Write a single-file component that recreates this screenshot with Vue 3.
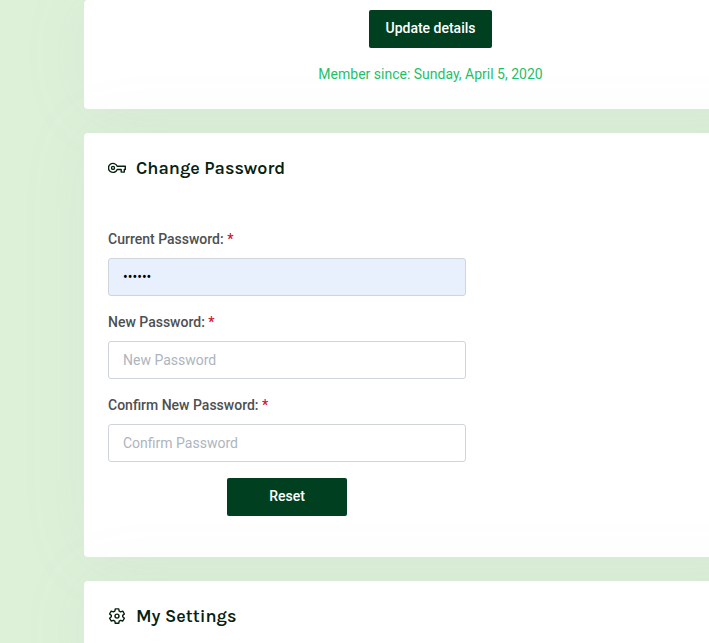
<script setup>
import { ref } from 'vue'

const fields = ref([
  { id: 'current-password', label: 'Current Password:', placeholder: 'Current Password', value: 'secret', filled: true },
  { id: 'new-password', label: 'New Password:', placeholder: 'New Password', value: '', filled: false },
  { id: 'confirm-password', label: 'Confirm New Password:', placeholder: 'Confirm Password', value: '', filled: false },
])
</script>

<template>
  <main class="page">
    <section class="card details">
      <button type="button" class="btn">Update details</button>
      <p class="since">Member since: Sunday, April 5, 2020</p>
    </section>

    <section class="card">
      <h2 class="title">
        <svg class="icon" viewBox="1 1 18 18" fill="none" stroke="currentColor" stroke-width="1.4" stroke-linejoin="round" aria-hidden="true">
          <path d="M10.2 8.3H18.3V11.5H17.3V14.1H14.2V11.5H10.2A4.5 4.5 0 1 1 10.2 8.3Z" />
          <circle cx="6" cy="9.9" r="1.5" />
        </svg>
        Change Password
      </h2>
      <form class="form" @submit.prevent>
        <div v-for="f in fields" :key="f.id" class="field">
          <label :for="f.id">{{ f.label }} <span class="required">*</span></label>
          <input :id="f.id" v-model="f.value" type="password" autocomplete="off" :placeholder="f.placeholder" :class="{ filled: f.filled }" />
        </div>
        <button type="submit" class="btn reset">Reset</button>
      </form>
    </section>

    <section class="card settings">
      <h2 class="title">
        <svg class="icon" viewBox="1 1 18 18" fill="none" stroke="currentColor" stroke-width="1.4" stroke-linejoin="round" aria-hidden="true">
          <path d="M8.3 2.9H11.7L12.2 5.1L13.6 5.9L15.8 5.2L17.4 8L15.7 9.4V10.8L17.4 12.2L15.8 15L13.6 14.3L12.2 15.1L11.7 17.3H8.3L7.8 15.1L6.4 14.3L4.2 15L2.6 12.2L4.3 10.8V9.4L2.6 8L4.2 5.2L6.4 5.9L7.8 5.1Z" />
          <circle cx="10" cy="10.1" r="2" />
        </svg>
        My Settings
      </h2>
    </section>
  </main>
</template>

<style>
body {
  margin: 0;
  background: #ddf1d9;
}
</style>

<style scoped>
.page {
  box-sizing: border-box;
  height: 100vh;
  padding-left: 84px;
  overflow: hidden;
  font-family: Roboto, "Liberation Sans", sans-serif;
  font-size: 14px;
  line-height: 21px;
}

.card {
  box-sizing: border-box;
  margin: 0 -68px 24px 0;
  padding: 24px;
  border-radius: 4px;
  background: #fff;
  box-shadow: 0 0 70px rgba(154, 161, 171, 0.08);
}

.details {
  display: flex;
  flex-direction: column;
  align-items: center;
  gap: 16px;
  padding-top: 10px;
}

.since {
  margin: 0;
  color: #1fbf6b;
}

.title {
  display: flex;
  align-items: center;
  gap: 10px;
  margin: 0;
  color: #06210f;
  font-family: Karla, Inter, sans-serif;
  font-size: 18px;
  font-weight: 600;
  line-height: 22px;
}

.icon {
  width: 18px;
  height: 18px;
  flex: none;
}

.form {
  display: flex;
  flex-direction: column;
  gap: 16px;
  max-width: 358px;
  margin: 50px 0 17px;
}

.field {
  display: flex;
  flex-direction: column;
  gap: 8px;
}

label {
  color: #4d5052;
  font-weight: 500;
}

.required {
  color: #d0103a;
}

input {
  box-sizing: border-box;
  width: 100%;
  height: 38px;
  padding: 0 14px;
  border: 1px solid #cfd4dd;
  border-radius: 3px;
  outline: none;
  background: #fff;
  color: #000;
  font: inherit;
}

input::placeholder {
  color: #adb5bd;
  opacity: 1;
}

input.filled {
  background: #e8f0fe;
}

.btn {
  height: 38px;
  padding: 0 16px 2px;
  border: 0;
  border-radius: 2px;
  background: #004021;
  color: #fff;
  font: inherit;
  font-weight: 500;
}

.reset {
  align-self: center;
  width: 120px;
}

.settings {
  margin-bottom: 0;
  min-height: 100px;
}
</style>
